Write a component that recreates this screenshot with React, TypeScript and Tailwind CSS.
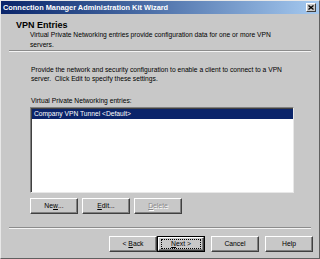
import type { ReactNode } from 'react';

function WinButton({ children, disabled, focused }: { children: ReactNode; disabled?: boolean; focused?: boolean }) {
  if (focused) {
    return (
      <div className="w-[48px] h-[16px] border border-black">
        <div className="h-full px-[2px] py-[1px] border border-t-white border-l-white border-r-[#404040] border-b-[#404040] shadow-[inset_-1px_-1px_#808080]">
          <div className="h-full flex items-center justify-center border border-dotted border-black text-[6.8px] text-black">
            <span>{children}</span>
          </div>
        </div>
      </div>
    );
  }
  return (
    <div
      className={`w-[48px] h-[16px] flex items-center justify-center border border-t-white border-l-white border-r-[#404040] border-b-[#404040] shadow-[inset_-1px_-1px_#808080] text-[6.8px] ${
        disabled ? 'text-[#8a8a8a] [text-shadow:1px_1px_#ffffff]' : 'text-black'
      }`}
    >
      {children}
    </div>
  );
}

function Separator() {
  return <div className="mx-[8px] border-t border-t-[#8c8c8c] border-b border-b-[#f4f4f4]" />;
}

export default function App() {
  return (
    <div
      className="w-[320px] h-[259px] overflow-hidden flex flex-col bg-[#c8c8c8] border-l border-t border-l-[#e8e8e8] border-t-[#e8e8e8] border-r border-b border-r-[#606060] border-b-[#606060]"
      style={{ fontFamily: '"Liberation Sans", Arial, sans-serif' }}
    >
      {/* Title bar */}
      <div className="h-[13px] flex items-center justify-between pl-[2px] pr-[3px] bg-gradient-to-r from-[#0a246a] to-[#a6caf0]">
        <span className="text-[7.4px] font-bold text-white leading-none">Connection Manager Administration Kit Wizard</span>
        <div className="w-[10px] h-[9px] flex items-center justify-center bg-[#c8c8c8] border border-t-white border-l-white border-r-[#404040] border-b-[#404040]">
          <svg width="6" height="5" viewBox="0 0 6 5">
            <path d="M0.5 0.5 L5.5 4.5 M5.5 0.5 L0.5 4.5" stroke="#000" strokeWidth="1.3" />
          </svg>
        </div>
      </div>

      {/* Header */}
      <div className="pl-[15px] pt-[6px]">
        <div className="text-[9px] font-bold text-black leading-[10px]">VPN Entries</div>
        <div className="pl-[14px] text-[6.7px] leading-[10px] text-black">
          Virtual Private Networking entries provide configuration data for one or more VPN
          <br />
          servers.
        </div>
      </div>
      <Separator />

      {/* Body */}
      <div className="pl-[30px] pt-[13px] text-[6.7px] text-black">
        <p className="leading-[9px]">
          Provide the network and security configuration to enable a client to connect to a VPN
          <br />
          server.&nbsp; Click Edit to specify these settings.
        </p>
        <p className="mt-[13px] leading-[9px]">Virtual Private Networking entries:</p>
        <div className="mt-[2px] -ml-[1px] w-[264px] h-[86px] bg-white border border-t-[#808080] border-l-[#808080] border-r-[#e8e8e8] border-b-[#e8e8e8] shadow-[inset_1px_1px_#404040]">
          <div className="ml-[1px] mt-[1px] h-[10px] flex items-center pl-[2px] bg-[#0a246a] text-white leading-none">
            Company VPN Tunnel &lt;Default&gt;
          </div>
        </div>
        <div className="mt-[5px] -ml-[1px] flex gap-[4px]">
          <WinButton>
            Ne<span className="underline">w</span>...
          </WinButton>
          <WinButton>
            <span className="underline">E</span>dit...
          </WinButton>
          <WinButton disabled>
            <span className="underline">D</span>elete
          </WinButton>
        </div>
      </div>

      <div className="mt-[13px]">
        <Separator />
      </div>

      {/* Footer buttons */}
      <div className="mt-[7px] flex justify-end pr-[6px]">
        <div className="flex">
          <WinButton>
            &lt;&nbsp;<span className="underline">B</span>ack
          </WinButton>
          <WinButton focused>
            <span className="underline">N</span>ext&nbsp;&gt;
          </WinButton>
        </div>
        <div className="ml-[6px] flex gap-[6px]">
          <WinButton>Cancel</WinButton>
          <WinButton>Help</WinButton>
        </div>
      </div>
    </div>
  );
}
